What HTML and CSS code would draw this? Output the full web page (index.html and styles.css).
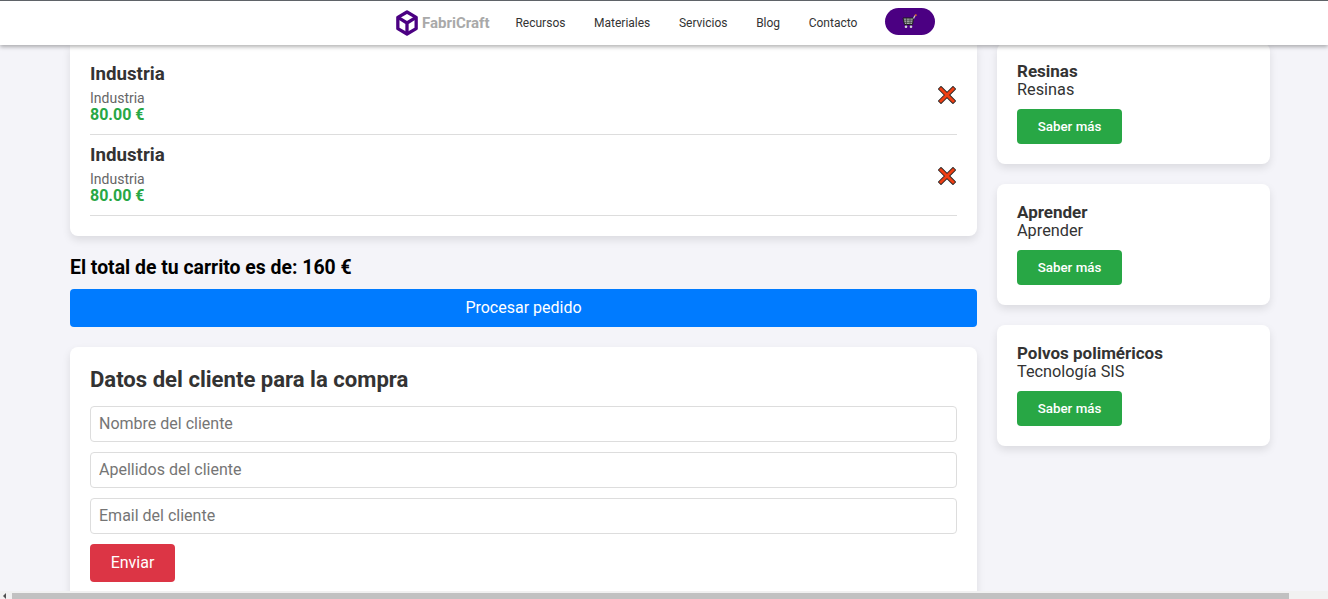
FILE: index.html
```html
<!DOCTYPE html>
<html lang="es">
<head>
    <meta charset="UTF-8">
    <title>FabriCraft - Carrito</title>
    <link rel="stylesheet" href="styles.css">
</head>
<body>

<!-- Barra de navegación -->
<header class="navbar">
    <a class="brand" href="#">
        <svg class="brand-icon" viewBox="0 0 24 28" width="22" height="26">
            <path d="M12 2 22 7.800V20.200L12 26 2 20.200V7.800Z" fill="none" stroke="#4b0082" stroke-width="3.600" stroke-linejoin="round"/>
            <path d="M3 8.500 12 14l9-5.500M12 14v11" fill="none" stroke="#4b0082" stroke-width="3.600"/>
        </svg>
        <span>FabriCraft</span>
    </a>
    <nav class="nav-links">
        <a href="#">Recursos</a>
        <a href="#">Materiales</a>
        <a href="#">Servicios</a>
        <a href="#">Blog</a>
        <a href="#">Contacto</a>
    </nav>
    <button class="cart-button">
        <svg viewBox="0 0 16 15" width="16" height="15">
            <path d="M1 4h10.500l-1 6.500H2.500Z" fill="#a3a8a8" stroke="#1c1c1c" stroke-width="1"/>
            <path d="M1.500 6.200h9.700M2 8.400h9M4.500 4v6.500M8 4v6.500" stroke="#3c3c3c" stroke-width="0.700"/>
            <path d="M11.500 4.500 13 1.500" fill="none" stroke="#c9c9c9" stroke-width="1.200"/>
            <path d="M13 1.500 14.500 .8" fill="none" stroke="#e0702a" stroke-width="1.500"/>
            <circle cx="4" cy="12.800" r="1.300" fill="#d5d5d5"/>
            <circle cx="9" cy="12.800" r="1.300" fill="#d5d5d5"/>
        </svg>
    </button>
</header>

<main class="page">
    <section class="col-main">
        <div class="card cart-list">
            <div class="cart-item">
                <div>
                    <h3>Industria</h3>
                    <p class="item-cat">Industria</p>
                    <p class="item-price">80.00 €</p>
                </div>
                <svg class="remove" viewBox="0 0 18 18" width="18" height="18">
                    <path d="M3 3 15 15M15 3 3 15" stroke="#222" stroke-width="4.600" stroke-linecap="square"/>
                    <path d="M3 3 15 15M15 3 3 15" stroke="#ee3f14" stroke-width="3" stroke-linecap="square"/>
                </svg>
            </div>
            <div class="cart-item">
                <div>
                    <h3>Industria</h3>
                    <p class="item-cat">Industria</p>
                    <p class="item-price">80.00 €</p>
                </div>
                <svg class="remove" viewBox="0 0 18 18" width="18" height="18">
                    <path d="M3 3 15 15M15 3 3 15" stroke="#222" stroke-width="4.600" stroke-linecap="square"/>
                    <path d="M3 3 15 15M15 3 3 15" stroke="#ee3f14" stroke-width="3" stroke-linecap="square"/>
                </svg>
            </div>
        </div>

        <h2 class="cart-total">El total de tu carrito es de: 160 €</h2>
        <button class="btn-process">Procesar pedido</button>

        <!-- Formulario del cliente -->
        <form class="card client-form">
            <h2>Datos del cliente para la compra</h2>
            <input type="text" placeholder="Nombre del cliente">
            <input type="text" placeholder="Apellidos del cliente">
            <input type="text" placeholder="Email del cliente">
            <button type="button" class="btn-send">Enviar</button>
        </form>
    </section>

    <aside class="col-side">
        <div class="card side-card">
            <h4>Resinas</h4>
            <p>Resinas</p>
            <a class="btn-more" href="#">Saber más</a>
        </div>
        <div class="card side-card">
            <h4>Aprender</h4>
            <p>Aprender</p>
            <a class="btn-more" href="#">Saber más</a>
        </div>
        <div class="card side-card">
            <h4>Polvos poliméricos</h4>
            <p>Tecnología SIS</p>
            <a class="btn-more" href="#">Saber más</a>
        </div>
    </aside>
</main>

<!-- Barra de scroll horizontal -->
<div class="hscroll">
    <span class="hscroll-arrow"></span>
    <span class="hscroll-thumb"></span>
</div>

</body>
</html>
```

FILE: styles.css
```css
* {
    box-sizing: border-box;
}

html, body {
    height: 100%;
}

body {
    margin: 0;
    display: flex;
    flex-direction: column;
    overflow: hidden;
    background-color: #f4f4f9;
    font-family: Roboto, "Liberation Sans", sans-serif;
    color: #333;
}

/* Barra de navegación */
.navbar {
    position: relative;
    z-index: 10;
    flex: none;
    height: 45px;
    display: flex;
    align-items: center;
    justify-content: center;
    padding-left: 3.400px;
    background-color: #fff;
    border-top: 1px solid #5f6368;
    box-shadow: 0 2px 4px rgba(0, 0, 0, 0.3);
}

.brand {
    display: flex;
    align-items: center;
    gap: 4px;
    margin-right: 26px;
    font-size: 15px;
    font-weight: 700;
    color: #a9a9a9;
    text-decoration: none;
}

.nav-links {
    display: flex;
    gap: 28.600px;
}

.nav-links a {
    font-size: 12px;
    color: #333;
    text-decoration: none;
}

.cart-button {
    display: flex;
    align-items: center;
    justify-content: center;
    width: 50px;
    height: 27px;
    margin-left: 28px;
    margin-bottom: 4px;
    padding: 0;
    border: none;
    border-radius: 14px;
    background-color: #4b0082;
}

/* Colonnes */
.page {
    flex: 1;
    min-height: 0;
    overflow: hidden;
    display: flex;
    align-items: flex-start;
    gap: 20px;
    padding: 0 58px 0 70px;
}

.col-main {
    width: 907px;
}

.col-side {
    width: 273px;
    margin-top: -2px;
    display: flex;
    flex-direction: column;
    gap: 20px;
}

.card {
    background-color: #fff;
    border-radius: 8px;
    box-shadow: 0 4px 8px rgba(0, 0, 0, 0.1);
}

/* Liste du carrito */
.cart-list {
    padding: 9px 20px 20px;
    border-top-left-radius: 0;
    border-top-right-radius: 0;
}

.cart-item {
    display: flex;
    align-items: center;
    justify-content: space-between;
    padding: 10px 1px 10px 0;
    border-bottom: 1px solid #ddd;
}

.cart-item h3 {
    margin: 0 0 5px;
    font-size: 18.720px;
    font-weight: 700;
    line-height: 21px;
}

.remove {
    margin-top: 2px;
}

.item-cat {
    margin: 0;
    font-size: 14px;
    line-height: 16px;
    color: #666;
}

.item-price {
    margin: 0;
    font-size: 16px;
    font-weight: 700;
    line-height: 18px;
    color: #28a745;
}

.cart-total {
    margin: 21px 0 10px;
    font-size: 19.400px;
    font-weight: 700;
    line-height: 22px;
    color: #000;
}

.btn-process {
    display: block;
    width: 100%;
    height: 38px;
    padding: 0 0 2px;
    border: none;
    border-radius: 4px;
    background-color: #007bff;
    color: #fff;
    font-family: inherit;
    font-size: 16px;
}

/* Formulaire */
.client-form {
    margin-top: 20px;
    padding: 20px;
    height: 260px;
}

.client-form h2 {
    margin: 0 0 14px;
    font-size: 22.100px;
    font-weight: 700;
    line-height: 25px;
}

.client-form input {
    display: block;
    width: 100%;
    height: 36px;
    margin-bottom: 10px;
    padding: 0 8px 2px;
    border: 1px solid #ddd;
    border-radius: 4px;
    font-family: inherit;
    font-size: 16px;
}

.client-form input::placeholder {
    color: #757575;
}

.btn-send {
    display: block;
    width: 85px;
    height: 38px;
    padding: 0 0 2px;
    border: none;
    border-radius: 4px;
    background-color: #dc3545;
    color: #fff;
    font-family: inherit;
    font-size: 16px;
}

/* Cartes latérales */
.side-card {
    height: 121px;
    padding: 19px 20px 20px;
}

.side-card h4 {
    margin: 0 0 1px;
    font-size: 17px;
    font-weight: 700;
    line-height: 18px;
}

.side-card p {
    margin: 0 0 10px;
    font-size: 16.300px;
    line-height: 18px;
}

.btn-more {
    display: block;
    width: 105px;
    height: 35px;
    border-radius: 4px;
    background-color: #28a745;
    color: #fff;
    font-size: 13.333px;
    font-weight: 500;
    line-height: 36px;
    text-align: center;
    text-decoration: none;
}

/* Scroll horizontal */
.hscroll {
    flex: none;
    height: 8px;
    display: flex;
    background-color: #f1f1f1;
    padding-top: 2px;
}

.hscroll-arrow {
    width: 12px;
    position: relative;
}

.hscroll-arrow::before {
    content: "";
    position: absolute;
    left: 3px;
    top: 0;
    border: 3px solid transparent;
    border-left-width: 0;
    border-right-color: #505050;
}

.hscroll-thumb {
    width: 1277px;
    background-color: #c1c1c1;
}
```
